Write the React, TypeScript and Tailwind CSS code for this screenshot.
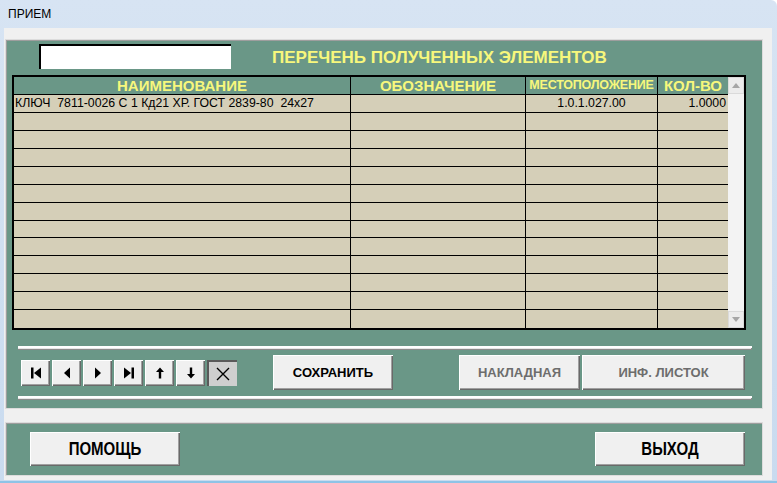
import React from 'react';

const raised =
  'bg-[#f0f0f0] shadow-[inset_1px_1px_0_#ffffff,inset_-1px_-1px_0_#696969,inset_-2px_-2px_0_#a0a0a0]';

const rows = Array.from({ length: 13 }, (_, i) =>
  i === 0
    ? { name: 'КЛЮЧ  7811-0026 С 1 Кд21 ХР. ГОСТ 2839-80  24х27', code: '', place: '1.0.1.027.00', qty: '1.0000' }
    : { name: '', code: '', place: '', qty: '' },
);

const NavIcon = ({ kind }: { kind: string }) => {
  if (kind === 'first')
    return (
      <svg width="12" height="12" viewBox="0 0 12 12">
        <rect x="1" y="0.5" width="2.5" height="11" fill="#000" />
        <polygon points="11,0.5 4,6 11,11.5" fill="#000" />
      </svg>
    );
  if (kind === 'prev')
    return (
      <svg width="12" height="12" viewBox="0 0 12 12">
        <polygon points="9,0.5 3,6 9,11.5" fill="#000" />
      </svg>
    );
  if (kind === 'next')
    return (
      <svg width="12" height="12" viewBox="0 0 12 12">
        <polygon points="3,0.5 9,6 3,11.5" fill="#000" />
      </svg>
    );
  if (kind === 'last')
    return (
      <svg width="12" height="12" viewBox="0 0 12 12">
        <polygon points="1,0.5 8,6 1,11.5" fill="#000" />
        <rect x="8.5" y="0.5" width="2.5" height="11" fill="#000" />
      </svg>
    );
  if (kind === 'up')
    return (
      <svg width="12" height="12" viewBox="0 0 12 12">
        <polygon points="6,0.5 2,5 4.8,5 4.8,11.5 7.2,11.5 7.2,5 10,5" fill="#000" />
      </svg>
    );
  if (kind === 'down')
    return (
      <svg width="12" height="12" viewBox="0 0 12 12">
        <polygon points="6,11.5 2,7 4.8,7 4.8,0.5 7.2,0.5 7.2,7 10,7" fill="#000" />
      </svg>
    );
  return (
    <svg width="16" height="16" viewBox="0 0 16 16">
      <path d="M2 2 L14 14 M14 2 L2 14" stroke="#000" strokeWidth="1.4" />
    </svg>
  );
};

const Separator = () => (
  <div className="ml-[12px] h-[4px] w-[734px] border-t-2 border-white bg-[#e6e6e6] shadow-[inset_-1px_-1px_0_#8a8a8a]" />
);

export default function App() {
  return (
    <div
      className="relative h-[483px] w-[777px] overflow-hidden rounded-tr-[6px] bg-gradient-to-b from-[#d7e4f3] to-[#c9dbef] text-black"
      style={{ fontFamily: '"Liberation Sans", Arial, sans-serif' }}
    >
      <div className="flex h-[28px] items-center pl-[8px] text-[12px]">ПРИЕМ</div>

      <div className="ml-[4px] flex h-[452px] w-[768px] flex-col bg-[#f0f0f0] pt-[11px]">
        {/* main panel */}
        <div className="ml-[1px] flex h-[370px] w-[758px] flex-col border border-[#dcdcdc] bg-[#6a9787] shadow-[inset_1px_1px_0_#9e9e9e]">
          <div className="flex h-[35px] items-start">
            <div className="ml-[33px] mt-[4px] h-[25px] w-[192px] border-l-2 border-t-2 border-black bg-white" />
            <div className="ml-[41px] mt-[8px] text-[17px] font-bold leading-[20px] text-[#f7f77c]">
              ПЕРЕЧЕНЬ ПОЛУЧЕННЫХ ЭЛЕМЕНТОВ
            </div>
          </div>

          {/* table */}
          <div className="ml-[6px] flex h-[255px] w-[734px] border-2 border-black bg-[#d5cfb8]">
            <div className="flex w-[714px] flex-col">
              <div className="flex h-[18px] border-b border-black bg-[#6a9787] font-bold leading-[17px] text-[#f7f77c]">
                <div className="w-[337px] border-r border-black text-center text-[15px]">НАИМЕНОВАНИЕ</div>
                <div className="w-[175px] border-r border-black text-center text-[15px]">ОБОЗНАЧЕНИЕ</div>
                <div className="w-[132px] overflow-hidden whitespace-nowrap border-r border-black text-center text-[12.5px] tracking-[-0.2px]">
                  МЕСТОПОЛОЖЕНИЕ
                </div>
                <div className="w-[70px] text-center text-[15px]">КОЛ-ВО</div>
              </div>
              {rows.map((r, i) => (
                <div
                  key={i}
                  className={`flex h-[18px] text-[12.3px] leading-[17px] ${i < rows.length - 1 ? 'border-b border-black' : ''}`}
                >
                  <div className="w-[337px] whitespace-pre border-r border-black pl-[1px]">{r.name}</div>
                  <div className="w-[175px] border-r border-black">{r.code}</div>
                  <div className="w-[132px] border-r border-black text-center">{r.place}</div>
                  <div className="w-[70px] pr-[2px] text-right">{r.qty}</div>
                </div>
              ))}
            </div>
            <div className="flex w-[16px] flex-col justify-between bg-[#f3f3f3]">
              <div className="flex h-[17px] items-center justify-center border border-[#dadada] bg-[#ececec]">
                <svg width="8" height="5" viewBox="0 0 8 5">
                  <polygon points="4,0 8,5 0,5" fill="#a6a6a6" />
                </svg>
              </div>
              <div className="flex h-[17px] items-center justify-center border border-[#dadada] bg-[#ececec]">
                <svg width="8" height="5" viewBox="0 0 8 5">
                  <polygon points="0,0 8,0 4,5" fill="#a6a6a6" />
                </svg>
              </div>
            </div>
          </div>

          <div className="mt-[16px]">
            <Separator />
          </div>

          <div className="mt-[5px] flex h-[35px] items-center">
            <div className="ml-[15px] flex gap-[2px]">
              {['first', 'prev', 'next', 'last', 'up', 'down'].map((k) => (
                <div key={k} className={`flex h-[26px] w-[29px] items-center justify-center ${raised}`}>
                  <NavIcon kind={k} />
                </div>
              ))}
              <div className="flex h-[26px] w-[30px] items-center justify-center border-l-2 border-t-2 border-[#5a5a5a] bg-[#cfcfcf]">
                <NavIcon kind="x" />
              </div>
            </div>
            <button className={`ml-[36px] h-[35px] w-[120px] text-[13px] font-bold ${raised}`}>СОХРАНИТЬ</button>
            <button className={`ml-[66px] h-[35px] w-[121px] text-[13px] font-bold text-[#6d6d6d] ${raised}`}>НАКЛАДНАЯ</button>
            <button className={`ml-[2px] h-[35px] w-[163px] text-[13px] font-bold text-[#6d6d6d] ${raised}`}>ИНФ. ЛИСТОК</button>
          </div>

          <div className="mt-[6px]">
            <Separator />
          </div>
        </div>

        {/* bottom panel */}
        <div className="ml-[1px] mt-[13px] flex h-[54px] w-[758px] items-center justify-between border border-[#dcdcdc] bg-[#6a9787] px-[24px] shadow-[inset_1px_1px_0_#9e9e9e]">
          <button className={`h-[34px] w-[150px] font-bold ${raised}`}>
            <span className="inline-block scale-y-[1.25] text-[15px]">ПОМОЩЬ</span>
          </button>
          <button className={`mr-[-7px] h-[34px] w-[150px] font-bold ${raised}`}>
            <span className="inline-block scale-y-[1.25] text-[15px]">ВЫХОД</span>
          </button>
        </div>
      </div>
      <div className="absolute bottom-0 left-0 h-[2px] w-full bg-[#8fc3e6]" />
    </div>
  );
}
